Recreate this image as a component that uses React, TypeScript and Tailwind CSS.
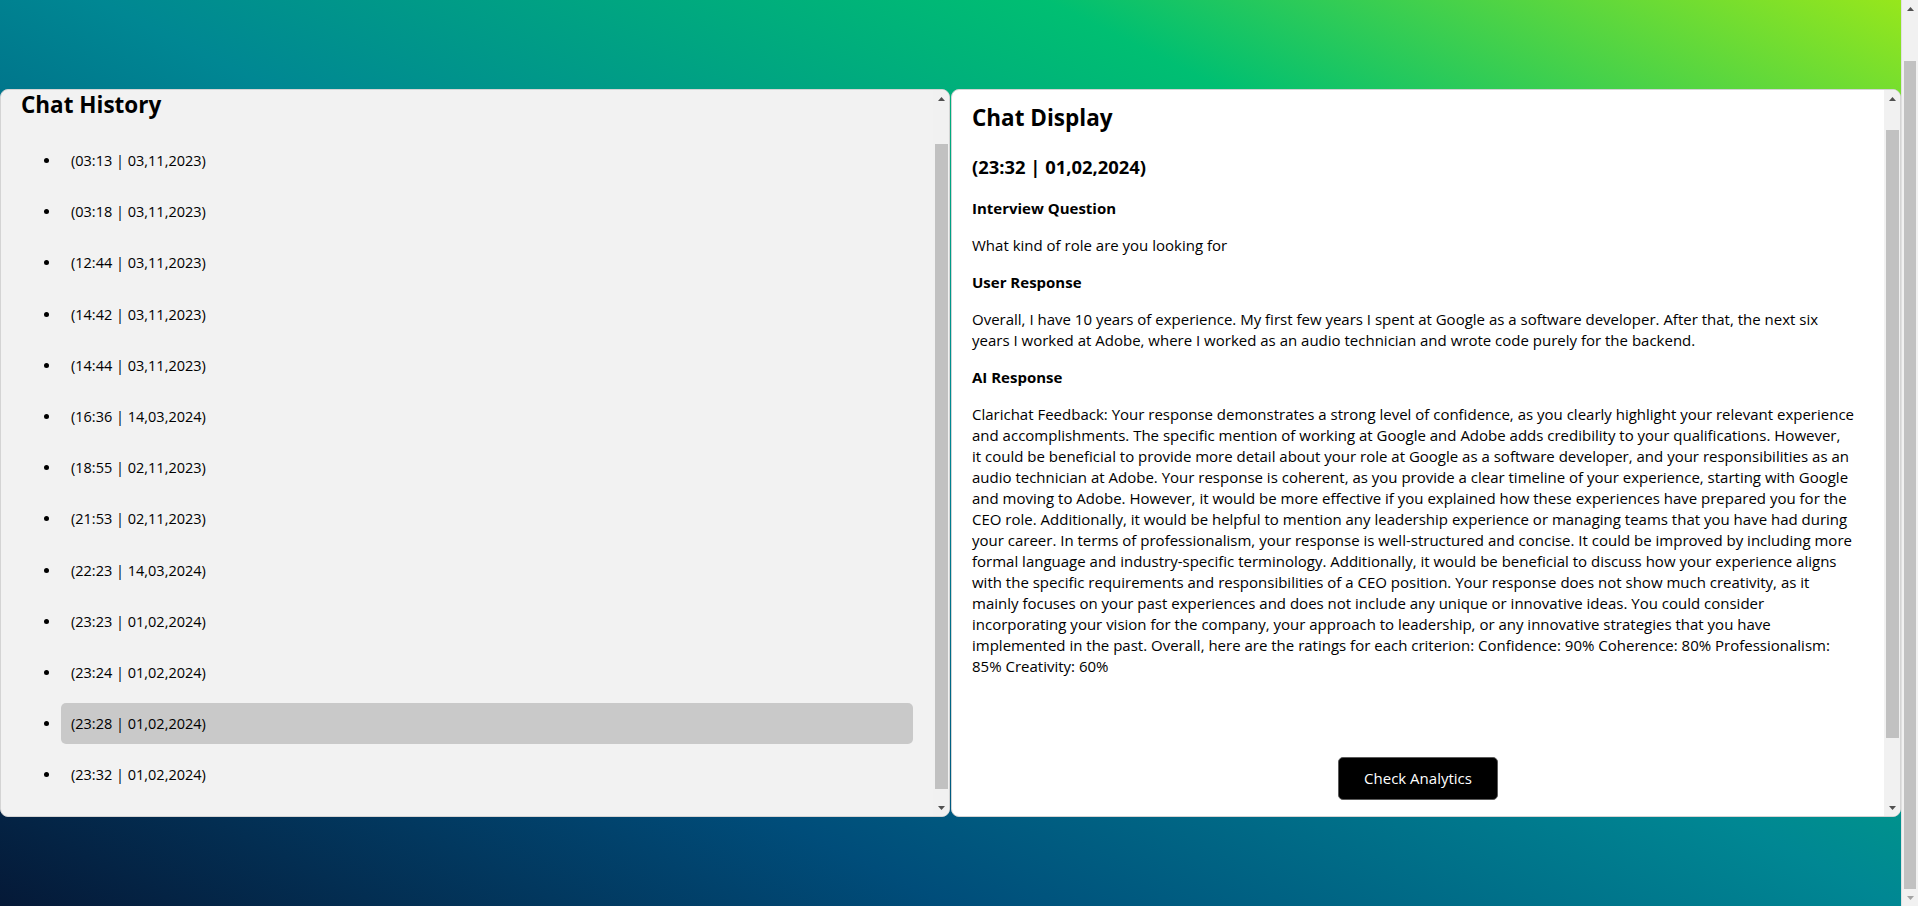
import { useLayoutEffect, useRef } from "react";

const history = [
  "(03:13 | 03,11,2023)",
  "(03:18 | 03,11,2023)",
  "(12:44 | 03,11,2023)",
  "(14:42 | 03,11,2023)",
  "(14:44 | 03,11,2023)",
  "(16:36 | 14,03,2024)",
  "(18:55 | 02,11,2023)",
  "(21:53 | 02,11,2023)",
  "(22:23 | 14,03,2024)",
  "(23:23 | 01,02,2024)",
  "(23:24 | 01,02,2024)",
  "(23:28 | 01,02,2024)",
  "(23:32 | 01,02,2024)",
];

const feedbackLines = [
  "Clarichat Feedback: Your response demonstrates a strong level of confidence, as you clearly highlight your relevant experience",
  "and accomplishments. The specific mention of working at Google and Adobe adds credibility to your qualifications. However,",
  "it could be beneficial to provide more detail about your role at Google as a software developer, and your responsibilities as an",
  "audio technician at Adobe. Your response is coherent, as you provide a clear timeline of your experience, starting with Google",
  "and moving to Adobe. However, it would be more effective if you explained how these experiences have prepared you for the",
  "CEO role. Additionally, it would be helpful to mention any leadership experience or managing teams that you have had during",
  "your career. In terms of professionalism, your response is well-structured and concise. It could be improved by including more",
  "formal language and industry-specific terminology. Additionally, it would be beneficial to discuss how your experience aligns",
  "with the specific requirements and responsibilities of a CEO position. Your response does not show much creativity, as it",
  "mainly focuses on your past experiences and does not include any unique or innovative ideas. You could consider",
  "incorporating your vision for the company, your approach to leadership, or any innovative strategies that you have",
  "implemented in the past. Overall, here are the ratings for each criterion: Confidence: 90% Coherence: 80% Professionalism:",
  "85% Creativity: 60%",
];

function Lines({ lines }: { lines: string[] }) {
  return (
    <>
      {lines.map((l, i) => (
        <span key={i}>
          {l}
          {i < lines.length - 1 && <br />}
        </span>
      ))}
    </>
  );
}

function Arrow({ up, color }: { up: boolean; color: string }) {
  return (
    <svg width="7" height="4" viewBox="0 0 7 4" aria-hidden="true">
      <path d={up ? "M0 4h7L3.5 0z" : "M0 0h7L3.5 4z"} fill={color} />
    </svg>
  );
}

function ScrollBar({
  barClass,
  thumbClass,
  downColor = "#505050",
}: {
  barClass: string;
  thumbClass: string;
  downColor?: string;
}) {
  return (
    <div className={`flex shrink-0 flex-col bg-[#f1f1f1] ${barClass}`}>
      <div className="flex h-[17px] shrink-0 items-center justify-center">
        <Arrow up color="#505050" />
      </div>
      <div className="min-h-0 flex-1">
        <div className={`bg-[#c1c1c1] ${thumbClass}`} />
      </div>
      <div className="flex h-[17px] shrink-0 items-center justify-center">
        <Arrow up={false} color={downColor} />
      </div>
    </div>
  );
}

export default function App() {
  const pageRef = useRef<HTMLDivElement>(null);
  const leftRef = useRef<HTMLDivElement>(null);
  const rightRef = useRef<HTMLDivElement>(null);

  useLayoutEffect(() => {
    if (pageRef.current) pageRef.current.scrollTop = 48;
    if (leftRef.current) leftRef.current.scrollTop = 42;
    if (rightRef.current) rightRef.current.scrollTop = 28;
  }, []);

  return (
    <div className="flex h-screen overflow-hidden font-['Open_Sans',sans-serif] text-black">
      <div ref={pageRef} className="h-full min-w-0 flex-1 overflow-hidden">
        <div className="bg-[linear-gradient(to_right_top,#051937,#004d7a,#008793,#00bf72,#a8eb12)] pt-[137px] pb-[89px]">
          <div className="grid h-[728px] grid-cols-2 gap-px">
            {/* Chat history panel */}
            <section className="flex h-full overflow-hidden rounded-lg border border-[#d4d4d4] bg-[#f2f2f2]">
              <div ref={leftRef} className="h-full min-w-0 flex-1 overflow-hidden p-5">
                <h2 className="mt-[23px] mb-[21px] text-[22.5px] font-bold leading-[28px]">Chat History</h2>
                <ul className="mb-4 list-disc pl-10">
                  {history.map((h, i) => (
                    <li
                      key={h}
                      className={`mb-[10px] cursor-pointer rounded-[5px] px-[10px] py-[10px] text-[14.5px] leading-[21.2px] ${
                        i === 11 ? "bg-[#c9c9c9]" : ""
                      }`}
                    >
                      {h}
                    </li>
                  ))}
                </ul>
              </div>
              <ScrollBar barClass="w-[16px]" thumbClass="mt-[37px] h-[645px] ml-[2px] mr-px" />
            </section>

            {/* Chat display panel */}
            <section className="flex h-full overflow-hidden rounded-lg border border-[#d4d4d4] bg-white">
              <div ref={rightRef} className="h-full min-w-0 flex-1 overflow-hidden p-5">
                <h2 className="my-[22px] text-[22.5px] font-bold leading-[28px]">Chat Display</h2>
                <h3 className="my-[18.72px] text-[18.4px] font-bold leading-[25px]">(23:32 | 01,02,2024)</h3>
                <h4 className="my-4 text-[15px] font-bold leading-[21px]">Interview Question</h4>
                <p className="my-4 text-[15px] leading-[21px]">What kind of role are you looking for</p>
                <h4 className="my-4 text-[15px] font-bold leading-[21px]">User Response</h4>
                <p className="my-4 text-[15px] leading-[21px]">
                  <Lines
                    lines={[
                      "Overall, I have 10 years of experience. My first few years I spent at Google as a software developer. After that, the next six",
                      "years I worked at Adobe, where I worked as an audio technician and wrote code purely for the backend.",
                    ]}
                  />
                </p>
                <h4 className="my-4 text-[15px] font-bold leading-[21px]">AI Response</h4>
                <p className="my-4 text-[15px] leading-[21px]">
                  <Lines lines={feedbackLines} />
                </p>
                <div className="mt-20 mb-[71px] flex justify-center">
                  <button className="rounded-[5px] border border-[#5a5a5a] bg-black px-[25px] py-[10px] text-[15px] leading-[21px] text-white">
                    Check Analytics
                  </button>
                </div>
              </div>
              <ScrollBar barClass="w-[16px]" thumbClass="mt-[23px] h-[608px] ml-[2px] mr-px" />
            </section>
          </div>
        </div>
      </div>
      <ScrollBar barClass="w-[17px] border-l border-[#e0e0e0]" thumbClass="mt-[44px] h-[828px] mx-[2px]" downColor="#a3a3a3" />
    </div>
  );
}
